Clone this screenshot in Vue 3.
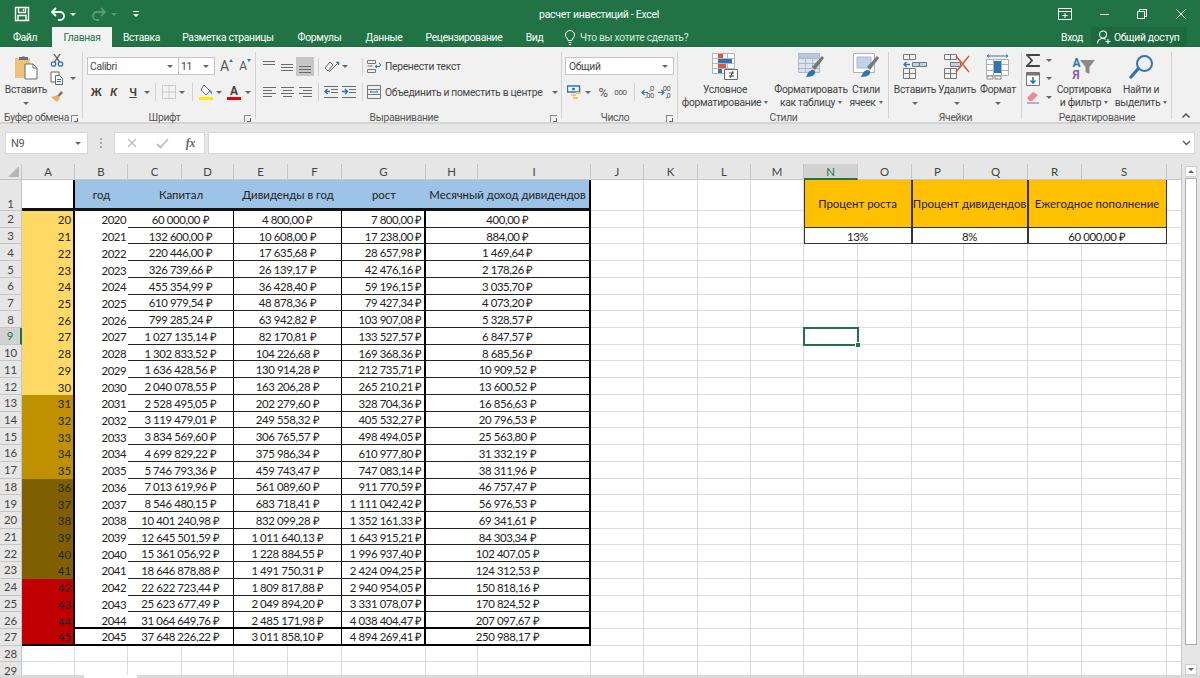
<script setup>
const letters = ['A','B','C','D','E','F','G','H','I','J','K','L','M','N','O','P','Q','R','S','']
const cap = ['60 000,00','132 600,00','220 446,00','326 739,66','455 354,99','610 979,54','799 285,24','1 027 135,14','1 302 833,52','1 636 428,56','2 040 078,55','2 528 495,05','3 119 479,01','3 834 569,60','4 699 829,22','5 746 793,36','7 013 619,96','8 546 480,15','10 401 240,98','12 645 501,59','15 361 056,92','18 646 878,88','22 622 723,44','25 623 677,49','31 064 649,76','37 648 226,22']
const div = ['4 800,00','10 608,00','17 635,68','26 139,17','36 428,40','48 878,36','63 942,82','82 170,81','104 226,68','130 914,28','163 206,28','202 279,60','249 558,32','306 765,57','375 986,34','459 743,47','561 089,60','683 718,41','832 099,28','1 011 640,13','1 228 884,55','1 491 750,31','1 809 817,88','2 049 894,20','2 485 171,98','3 011 858,10']
const gro = ['7 800,00','17 238,00','28 657,98','42 476,16','59 196,15','79 427,34','103 907,08','133 527,57','169 368,36','212 735,71','265 210,21','328 704,36','405 532,27','498 494,05','610 977,80','747 083,14','911 770,59','1 111 042,42','1 352 161,33','1 643 915,21','1 996 937,40','2 424 094,25','2 940 954,05','3 331 078,07','4 038 404,47','4 894 269,41']
const mon = ['400,00','884,00','1 469,64','2 178,26','3 035,70','4 073,20','5 328,57','6 847,57','8 685,56','10 909,52','13 600,52','16 856,63','20 796,53','25 563,80','31 332,19','38 311,96','46 757,47','56 976,53','69 341,61','84 303,34','102 407,05','124 312,53','150 818,16','170 824,52','207 097,67','250 988,17']
const rub = v => v + ' ₽'

const cells = []
function add(r, c, text, cls, span = 1, rspan = 1) {
  cells.push({
    key: r + '-' + c,
    text,
    cls,
    pos: { gridColumn: `${c + 1} / span ${span}`, gridRow: `${r + 1} / span ${rspan}` }
  })
}
// column numbers: A=1 ... S=19, filler=20
for (let r = 1; r <= 29; r++) {
  for (let c = 1; c <= 20; c++) {
    const inTable = c <= 9 && r <= 27
    const inParam = c >= 14 && c <= 19 && r <= 3
    if (!inTable && !inParam) add(r, c, '', 'plain')
  }
}
add(1, 1, '', 'a1')
add(1, 2, 'год', 'blue ctr')
add(1, 3, 'Капитал', 'blue ctr', 2)
add(1, 5, 'Дивиденды в год', 'blue ctr', 2)
add(1, 7, 'рост', 'blue ctr')
add(1, 8, 'Месячный доход дивидендов', 'blue ctr end', 2)
for (let i = 0; i < 26; i++) {
  const r = i + 2
  const edge = r === 27 ? ' last' : r === 26 ? ' prelast' : ''
  const tone = i <= 10 ? 'gold1' : i <= 15 ? 'gold2' : i <= 21 ? 'gold3' : 'red'
  add(r, 1, String(20 + i), 'age rgt ' + tone + edge)
  add(r, 2, String(2020 + i), 'year rgt' + edge)
  add(r, 3, rub(cap[i]), 'val ctr thin' + edge, 2)
  add(r, 5, rub(div[i]), 'val ctr thin' + edge, 2)
  add(r, 7, rub(gro[i]), 'val rgt thick' + edge)
  add(r, 8, rub(mon[i]), 'val ctr thick' + edge, 2)
}
add(1, 14, 'Процент роста', 'amber ctr', 2, 2)
add(1, 16, 'Процент дивидендов', 'amber ctr', 2, 2)
add(1, 18, 'Ежегодное пополнение', 'amber ctr', 2, 2)
add(3, 14, '13%', 'param ctr', 2)
add(3, 16, '8%', 'param ctr', 2)
add(3, 18, '60 000,00 ₽', 'param ctr', 2)

const rows = Array.from({ length: 29 }, (_, i) => i + 1)
const selPos = { gridColumn: '15 / span 1', gridRow: '10 / span 1' }
</script>

<template>
  <div class="app">
    <div class="title">
      <div class="qat">
        <svg class="q-save" width="16" height="16" viewBox="0 0 16 16" fill="none" stroke="#fff" stroke-width="1.4"><path d="M1.500 1.500h13v13h-13z"/><path d="M4.500 1.500v5h7v-5M4 14.500v-5h8v5"/><path d="M9.500 3v2" /></svg>
        <svg class="q-undo" width="16" height="14" viewBox="0 0 16 14" fill="none" stroke="#fff" stroke-width="1.8"><path d="M6 1 2 5l4 4"/><path d="M2 5h8a4 4 0 0 1 0 8H8"/></svg>
        <i class="caret white"></i>
        <svg class="q-redo" width="16" height="14" viewBox="0 0 16 14" fill="none" stroke="#5b9a78" stroke-width="1.8"><path d="m10 1 4 4-4 4"/><path d="M14 5H6a4 4 0 0 0 0 8h2"/></svg>
        <i class="caret dim"></i>
        <svg class="q-cust" width="8" height="8" viewBox="0 0 8 8" fill="#fff"><path d="M1 1h6v1H1zM1 4h6L4 7z"/></svg>
      </div>
      <div class="doc">расчет инвестиций - Excel</div>
      <div class="win">
        <svg width="14" height="12" viewBox="0 0 14 12" fill="none" stroke="#fff"><path d="M.5.500h13v11H.5z"/><path d="M1 3.500h12M7 5v5M4.500 7.500h5"/></svg>
        <svg width="12" height="12" viewBox="0 0 12 12" stroke="#cfe3d8"><path d="M2 6.500h9"/></svg>
        <svg width="12" height="12" viewBox="0 0 12 12" fill="none" stroke="#fff"><path d="M1.500 3.500h7v7h-7zM3.500 3.500v-2h7v7h-2"/></svg>
        <svg width="12" height="12" viewBox="0 0 12 12" stroke="#fff"><path d="m1.500 1.500 9 9m0-9-9 9"/></svg>
      </div>
    </div>

    <div class="tabs">
      <span class="tab t1">Файл</span>
      <span class="tab t2 on">Главная</span>
      <span class="tab t3">Вставка</span>
      <span class="tab t4">Разметка страницы</span>
      <span class="tab t5">Формулы</span>
      <span class="tab t6">Данные</span>
      <span class="tab t7">Рецензирование</span>
      <span class="tab t8">Вид</span>
      <span class="tell">
        <svg width="12" height="15" viewBox="0 0 12 15" fill="none" stroke="#fff"><path d="M4 10.500C4 8.500 1.500 7.500 1.500 5a4.500 4.500 0 0 1 9 0c0 2.500-2.500 3.500-2.500 5.500zM4.500 12.500h3M5 14.500h2"/></svg>
        Что вы хотите сделать?
      </span>
      <span class="login">Вход</span>
      <span class="share">
        <svg width="14" height="14" viewBox="0 0 14 14" fill="none" stroke="#fff" stroke-width="1.100"><circle cx="6" cy="4.500" r="3.500"/><path d="M.5 13.500c0-3 2-5 5.500-5 1.200 0 2 .3 2.700.7M11 9v5M8.500 11.500h5"/></svg>
        Общий доступ
      </span>
    </div>

    <div class="ribbon">
      <section class="group g-clip">
        <div class="body row-body">
          <div class="big paste">
            <svg width="24" height="26" viewBox="0 0 24 26"><path d="M1 4h15v20H1z" fill="#eec27a"/><path d="M5 3h3a2 2 0 0 1 3 0h3v3H5z" fill="#6d6d6d"/><path d="M11 10h8l4 4v11H11z" fill="#fff" stroke="#6d6d6d"/><path d="M19 10v4h4" fill="none" stroke="#6d6d6d"/></svg>
            <span>Вставить</span>
            <i class="caret"></i>
          </div>
          <div class="smalls clip-smalls">
            <svg width="14" height="14" viewBox="0 0 14 14" fill="none" stroke="#2e74b5" stroke-width="1.300"><circle cx="3.500" cy="11" r="2.200"/><circle cx="10.500" cy="11" r="2.200"/><path d="M4.500 9 10 1M9.500 9 4 1" stroke="#555"/></svg>
            <span class="with-caret">
              <svg width="14" height="14" viewBox="0 0 14 14" fill="#fff" stroke="#666"><path d="M1 1h8v10H1z"/><path d="M5.500 4.500h4l3 3v6h-7z"/><path d="M7 8.500h4M7 10.500h4" stroke="#2e74b5"/></svg>
              <i class="caret"></i>
            </span>
            <svg width="14" height="14" viewBox="0 0 14 14"><path d="m7 7 4-5 2 2-4 4z" fill="#777"/><path d="M7 6 10 9 7 13 1 8l4-1z" fill="#e8b25c"/></svg>
          </div>
        </div>
        <div class="glabel"><span>Буфер обмена</span><i class="launch"></i></div>
      </section>

      <section class="group g-font">
        <div class="body">
          <div class="line font-l1">
            <div class="combo c-font">Calibri<i class="caret"></i></div>
            <div class="combo c-size">11<i class="caret"></i></div>
            <span class="glyph-a big-a">A<i class="tri up"></i></span>
            <span class="glyph-a small-a">A<i class="tri"></i></span>
          </div>
          <div class="line font-l2">
            <b class="fmt">Ж</b>
            <b class="fmt it">К</b>
            <b class="fmt ul">Ч</b>
            <i class="caret"></i>
            <i class="vsep"></i>
            <svg width="14" height="14" viewBox="0 0 14 14" fill="none" stroke="#a8a8a8" stroke-dasharray="1 1"><path d="M.5.500h13v13H.5zM7 .5v13M.5 7h13"/></svg>
            <i class="caret"></i>
            <i class="vsep"></i>
            <svg width="16" height="16" viewBox="0 0 16 16"><path d="m6 1 6 6-4 4-5-5z" fill="#fff" stroke="#666"/><path d="M12 6c2 1 2 3 2 4 -1 0-2-2-2-4z" fill="#2e74b5"/><path d="M1 13h14v3H1z" fill="#ffeb00"/></svg>
            <i class="caret"></i>
            <span class="color-a">A<i></i></span>
            <i class="caret"></i>
          </div>
        </div>
        <div class="glabel"><span>Шрифт</span><i class="launch"></i></div>
      </section>

      <section class="group g-align">
        <div class="body">
          <div class="line align-l1">
            <svg width="12" height="14" viewBox="0 0 12 14" stroke="#6a6a6a"><path d="M0 1.500h12M0 4.500h12"/></svg>
            <svg width="12" height="14" viewBox="0 0 12 14" stroke="#6a6a6a"><path d="M0 4.500h12M0 7.500h12M0 10.500h12"/></svg>
            <span class="pressed"><svg width="12" height="14" viewBox="0 0 12 14" stroke="#6a6a6a"><path d="M0 6.500h12M0 9.500h12M0 12.500h12"/></svg></span>
            <i class="vsep"></i>
            <svg width="16" height="14" viewBox="0 0 16 14" fill="none" stroke="#666"><path d="m1 8 5-6 3 3-5 6zM5 12 15 2"/><path d="m15 2-3 .5M15 2l-.5 3" stroke="#2e74b5"/></svg>
            <i class="caret"></i>
            <i></i>
            <i class="vsep"></i>
            <svg width="14" height="13" viewBox="0 0 14 13" fill="none" stroke="#777"><path d="M.5.500h8v3h-8zM.5 9.500h8v3h-8zM.5 6h5"/><path d="M8 6.500h4a1.500 1.500 0 0 0 0-3M10 5l-2 1.500L10 8" stroke="#2e74b5"/></svg>
            <span class="rt">Перенести текст</span>
          </div>
          <div class="line align-l2">
            <svg width="13" height="12" viewBox="0 0 13 12" stroke="#6a6a6a"><path d="M0 1.500h13M0 4.500h9M0 7.500h13M0 10.500h9"/></svg>
            <svg width="13" height="12" viewBox="0 0 13 12" stroke="#6a6a6a"><path d="M0 1.500h13M2 4.500h9M0 7.500h13M2 10.500h9"/></svg>
            <svg width="13" height="12" viewBox="0 0 13 12" stroke="#6a6a6a"><path d="M0 1.500h13M4 4.500h9M0 7.500h13M4 10.500h9"/></svg>
            <i class="vsep"></i>
            <svg width="14" height="12" viewBox="0 0 14 12" fill="none" stroke="#6a6a6a"><path d="M0 .5h14M7 3.500h7M7 6.500h7M0 11.500h14"/><path d="M6 5.500H1M3.500 3l-2.500 2.500L3.500 8" stroke="#2e74b5" stroke-width="1.500"/></svg>
            <svg width="14" height="12" viewBox="0 0 14 12" fill="none" stroke="#6a6a6a"><path d="M0 .5h14M7 3.500h7M7 6.500h7M0 11.500h14"/><path d="M0 5.500h5M3 3l2.500 2.500L3 8" stroke="#2e74b5" stroke-width="1.500"/></svg>
            <i></i>
            <i class="vsep"></i>
            <svg width="14" height="14" viewBox="0 0 14 14" fill="none" stroke="#777"><path d="M.5.500h13v13H.5zM.5 4.500h13M.5 9.500h13"/><path d="M3 7h8M3 7l1.500-1M11 7 9.500 6" stroke="#2e74b5"/></svg>
            <span class="rt">Объединить и поместить в центре</span>
            <i class="caret"></i>
          </div>
        </div>
        <div class="glabel"><span>Выравнивание</span><i class="launch"></i></div>
      </section>

      <section class="group g-num">
        <div class="body">
          <div class="line num-l1"><div class="combo c-num">Общий<i class="caret"></i></div></div>
          <div class="line num-l2">
            <svg width="15" height="15" viewBox="0 0 15 15"><path d="M.5 1h12v6H.5z" fill="#fff" stroke="#2e74b5" stroke-width="1.500"/><circle cx="6.500" cy="4" r="1.500" fill="#2e74b5"/><path d="M4 9h5v2H4zM9 7h5v2H9zM6 12h5v2H6z" fill="#f0c77a"/></svg>
            <i class="caret"></i>
            <span class="pct">%</span>
            <span class="thou">000</span>
            <i class="vsep"></i>
            <span class="dec">
              <span class="d-top">,0</span>
              <span class="d-bot">,00</span>
              <svg width="7" height="7" viewBox="0 0 7 7" fill="none" stroke="#2e74b5" stroke-width="1.200"><path d="M7 3.500H1M3.500 1 1 3.500 3.500 6"/></svg>
            </span>
            <span class="dec">
              <span class="d-top">,00</span>
              <span class="d-bot">,0</span>
              <svg width="7" height="7" viewBox="0 0 7 7" fill="none" stroke="#2e74b5" stroke-width="1.200"><path d="M0 3.500h6M3.500 1 6 3.500 3.500 6"/></svg>
            </span>
          </div>
        </div>
        <div class="glabel"><span>Число</span><i class="launch"></i></div>
      </section>

      <section class="group g-styles">
        <div class="body bigs styles-cols">
          <div class="big">
            <svg width="26" height="28" viewBox="0 0 26 28"><path d="M.5.500h22v20H.5zM6.500.5v20M15.500.5v20M.5 5.500h22M.5 10.500h22M.5 15.500h22" fill="#fff" stroke="#b5b5b5"/><path d="M6 1h5v4H6zM6 11h8v4H6z" fill="#d9583b"/><path d="M6 6h14v4H6zM6 16h4v4H6z" fill="#2e74b5"/><path d="M12.500 16.500h13v10h-13z" fill="#fff" stroke="#6a6a6a"/><path d="M17 20h5M17 23h5M21 18l-3 7" stroke="#444" fill="none"/></svg>
            <span>Условное</span><span>форматирование<i class="caret inl"></i></span>
          </div>
          <div class="big">
            <svg width="26" height="28" viewBox="0 0 26 28"><path d="M.5.500h21v19H.5zM7.500.5v19M14.500.5v19M.5 5.500h21M.5 10.500h21M.5 15.500h21" fill="#d8e4f2" stroke="#b0b8c2"/><path d="M1 1h20v4H1z" fill="#b5c7dc"/><path d="M14 14 24 3l2 2-9 12z" fill="#777"/><path d="M8 24c3-7 6-8 9-6 1 3-2 6-9 6z" fill="#2e74b5"/></svg>
            <span>Форматировать</span><span>как таблицу<i class="caret inl"></i></span>
          </div>
          <div class="big">
            <svg width="26" height="28" viewBox="0 0 26 28"><path d="M.5.500h21v19H.5z" fill="#fff" stroke="#b0b0b0"/><path d="M4 4h14v11H4z" fill="#bcd3ea" stroke="#b0b8c2"/><path d="M14 14 24 3l2 2-9 12z" fill="#777"/><path d="M8 24c3-7 6-8 9-6 1 3-2 6-9 6z" fill="#2e74b5"/></svg>
            <span>Стили</span><span>ячеек<i class="caret inl"></i></span>
          </div>
        </div>
        <div class="glabel center"><span>Стили</span></div>
      </section>

      <section class="group g-cells">
        <div class="body bigs cells-cols">
          <div class="big">
            <svg width="24" height="28" viewBox="0 0 24 28" fill="none" stroke="#777"><path d="M.5 1.500h12v5H.5zM6.500 1.500v5M.5 15.500h12v10H.5zM.5 20.500h12M6.500 15.500v10"/><path d="M9.500 9.500h14v4h-14zM16.500 9.500v4" fill="#bcd3ea"/><path d="M7 11.500H1M3.500 9 1 11.500 3.500 14" stroke="#2e74b5" stroke-width="1.300"/></svg>
            <span>Вставить</span><i class="caret"></i>
          </div>
          <div class="big">
            <svg width="26" height="28" viewBox="0 0 26 28" fill="none" stroke="#777"><path d="M.5 1.500h12v5H.5zM6.500 1.500v5M.5 15.500h12v10H.5zM.5 20.500h12M6.500 15.500v10"/><path d="M6.500 9.500h10v4h-10z" fill="#bcd3ea"/><path d="m12 3 13 16m0-16L12 19" stroke="#d9583b" stroke-width="1.500"/></svg>
            <span>Удалить</span><i class="caret"></i>
          </div>
          <div class="big">
            <svg width="24" height="28" viewBox="0 0 24 28" fill="none" stroke="#b0b0b0"><path d="M.5 6.500h22v16H.5zM7.500 6.500v16M15.500 6.500v16M.5 11.500h22M.5 17.500h22" fill="#fff"/><path d="M8 8h7v12H8z" fill="#2e74b5" stroke="none"/><path d="M1 3h21M1 3l2-1.500M1 3l2 1.500M22 3l-2-1.500M22 3l-2 1.500" stroke="#2e74b5"/><path d="M1 23h6v3H1zM9 23h6v3H9z" fill="#fff" stroke="#888"/></svg>
            <span>Формат</span><i class="caret"></i>
          </div>
        </div>
        <div class="glabel center"><span>Ячейки</span></div>
      </section>

      <section class="group g-edit">
        <div class="body bigs edit-cols">
          <div class="smalls edit-smalls">
            <span class="with-caret">
              <svg width="14" height="13" viewBox="0 0 14 13" fill="none" stroke="#444" stroke-width="1.800"><path d="M13 2V1H1l5 5.500L1 12h12v-1"/></svg>
              <i class="caret"></i>
            </span>
            <span class="with-caret">
              <svg width="14" height="14" viewBox="0 0 14 14" fill="#fff" stroke="#777"><path d="M.5.500h13v13H.5z"/><path d="M1 1h12v2H1z" fill="#777"/><path d="M7 5v6M4.500 8.500 7 11l2.500-2.500" fill="none" stroke="#2e74b5" stroke-width="1.600"/></svg>
              <i class="caret"></i>
            </span>
            <span class="with-caret">
              <svg width="14" height="14" viewBox="0 0 14 14"><path d="m1 8 6-6 5 3-6 6H3z" fill="#ea8a9a"/><path d="M1 13h12" stroke="#777"/></svg>
              <i class="caret"></i>
            </span>
          </div>
          <div class="big">
            <div class="sort-ico"><span class="az"><em>А</em><u>Я</u></span>
              <svg width="15" height="16" viewBox="0 0 15 16"><path d="M0 1h15L9.500 8v7l-4-2V8z" fill="#8a8a8a"/></svg>
            </div>
            <span>Сортировка</span><span>и фильтр<i class="caret inl"></i></span>
          </div>
          <div class="big">
            <svg width="26" height="28" viewBox="0 0 26 28" fill="none" stroke="#2e74b5"><circle cx="16.500" cy="10.500" r="7.500" stroke-width="2"/><path d="m10 16-7 8" stroke-width="3.400" stroke-linecap="round"/></svg>
            <span>Найти и</span><span>выделить<i class="caret inl"></i></span>
          </div>
        </div>
        <div class="glabel center"><span>Редактирование</span></div>
      </section>

      <div class="collapse">
        <svg width="10" height="7" viewBox="0 0 10 7" fill="none" stroke="#555" stroke-width="1.500"><path d="m1.500 5.500 3.500-3.500 3.500 3.500"/></svg>
      </div>
    </div>

    <div class="fbar">
      <div class="namebox">N9<i class="caret"></i></div>
      <div class="dots"></div>
      <div class="fxbox">
        <svg width="12" height="12" viewBox="0 0 12 12" stroke="#bdbdbd" stroke-width="1.300"><path d="m2 2 8 8m0-8-8 8"/></svg>
        <svg width="13" height="12" viewBox="0 0 13 12" fill="none" stroke="#bdbdbd" stroke-width="1.800"><path d="m1 7 3.500 3.500L12 2"/></svg>
        <span class="fx">fx</span>
      </div>
      <div class="finput">
        <svg width="9" height="6" viewBox="0 0 9 6" fill="none" stroke="#555" stroke-width="1.300"><path d="m1 1 3.500 3.500L8 1"/></svg>
      </div>
    </div>

    <div class="sheet">
      <div class="grid">
        <div class="corner"><i></i></div>
        <div v-for="(l, i) in letters" :key="'h' + i" class="colh" :class="{ act: l === 'N' }">{{ l }}</div>
        <div
          v-for="r in rows"
          :key="'r' + r"
          class="rowh"
          :class="{ act: r === 9, tall: r === 1 }"
          :style="{ gridColumn: '1', gridRow: String(r + 1) }"
        >{{ r }}</div>
        <div v-for="c in cells" :key="c.key" class="cell" :class="c.cls" :style="c.pos">{{ c.text }}</div>
        <div class="sel" :style="selPos"><i></i></div>
      </div>
      <div class="vscroll">
        <div class="sb-btn"><i class="up"></i></div>
        <div class="thumb"></div>
        <div class="sb-btn"><i></i></div>
      </div>
    </div>

    <div class="strip"><i class="s1"></i><i class="s2"></i><i class="s3"></i></div>
  </div>
</template>

<style>
html, body { margin: 0; background: #e6e6e6; }
</style>

<style scoped>
* { box-sizing: border-box; }
i { font-style: normal; display: block; }
.app {
  width: 1200px; height: 678px; overflow: hidden; display: flex; flex-direction: column;
  background: #e6e6e6; font-family: Roboto, "Open Sans", sans-serif; color: #444; font-size: 10.300px; letter-spacing: -0.3px;
}

/* title bar */
.title { height: 28px; flex: none; background: #217346; display: grid; grid-template-columns: 1fr auto 1fr; align-items: center; color: #fff; }
.qat { display: flex; align-items: center; padding-left: 14px; }
.q-undo { margin-left: 20px; }
.q-redo { margin-left: 15px; }
.q-cust { margin-left: 15px; }
.caret { width: 0; height: 0; border-left: 3px solid transparent; border-right: 3px solid transparent; border-top: 3px solid #666; }
.caret.white { border-top-color: #fff; margin-left: 4px; }
.caret.dim { border-top-color: #5b9a78; margin-left: 4px; }
.caret.inl { display: inline-block; margin-left: 3px; vertical-align: 2px; border-left-width: 2.500px; border-right-width: 2.500px; }
.doc { font-size: 10.500px; transform: translateX(-1px); }
.win { display: grid; grid-template-columns: 39px 39px 38px 39px; justify-content: end; justify-items: center; align-items: center; }

/* tabs */
.tabs { height: 19px; flex: none; background: #217346; display: grid; grid-template-columns: 50px 2px 60px 59px 114px 69px 60px 100px 41px 9px 130px 1fr auto; align-items: stretch; color: #fff; box-shadow: inset 0 -1px 0 #1d6a40; }
.tab { display: flex; align-items: center; justify-content: center; white-space: nowrap; }
.t2 { grid-column: 3; }
.tab.on { background: #f3f3f3; color: #217346; margin-top: -1px; }
.tell { grid-column: 11; display: flex; align-items: center; gap: 4px; white-space: nowrap; color: #d9e8df; }
.tell svg { flex: none; }
.login { grid-column: 12; justify-self: end; align-self: center; margin-right: 8px; }
.share { grid-column: 13; width: 96px; margin-right: 13px; background: #1d6a40; display: flex; align-items: center; gap: 3px; padding-left: 6px; white-space: nowrap; margin-top: -1px; }

/* ribbon */
.ribbon { height: 77px; flex: none; display: flex; background: #f1f1f1; border-bottom: 2px solid #d4d4d4; }
.group { position: relative; display: flex; flex-direction: column; padding-top: 6px; }
.group::after { content: ""; position: absolute; right: 0; top: 5px; bottom: 3px; width: 1px; background: #d2d2d2; }
.g-clip { width: 83px; }
.g-font { width: 173px; }
.g-align { width: 306px; }
.g-num { width: 116px; }
.g-styles { width: 211px; }
.g-cells { width: 133px; }
.g-edit { width: 150px; }
.body { height: 59px; flex: none; }
.row-body { display: flex; }
.glabel { height: 10px; margin-top: 1px; display: flex; align-items: center; padding: 0 2px; line-height: 10px; color: #555; white-space: nowrap; }
.glabel span { flex: 1; text-align: center; }
.launch { width: 7px; height: 7px; margin-right: 3px; border-left: 1px solid #888; border-top: 1px solid #888; position: relative; }
.launch::after { content: ""; position: absolute; right: 0; bottom: 0; width: 3px; height: 3px; border-right: 1px solid #666; border-bottom: 1px solid #666; }
.big { display: flex; flex-direction: column; align-items: center; line-height: 13px; white-space: nowrap; min-width: 0; }
.big svg { height: 28px; flex: none; margin-bottom: 2px; }
.big .caret { margin-top: 6px; }
.big .caret.inl { margin-top: 0; }
.paste { width: 52px; }
.paste svg { margin-top: 1px; margin-bottom: 3px; height: 26px; }
.smalls { display: flex; flex-direction: column; justify-content: space-between; height: 50px; }
.clip-smalls { margin-left: -2px; }
.with-caret { display: flex; align-items: center; gap: 6px; }
.bigs { display: grid; justify-items: center; }
.styles-cols { grid-template-columns: 94px 78px 32px; }
.cells-cols { grid-template-columns: 52px 32px 50px; }
.edit-cols { grid-template-columns: 30px 64px 50px; }
.edit-smalls { justify-self: end; margin-top: 1px; height: 50px; }

.line { display: grid; align-items: center; justify-items: center; height: 18px; padding-left: 4px; }
.font-l1 { margin-top: 4px; margin-bottom: 8px; grid-template-columns: 92px 36px 19px 18px; }
.font-l2 { grid-template-columns: 18px 17px 22px 5px 13px 14px 12px 8px 20px 6px 24px 4px; }
.combo { height: 18px; width: 100%; background: #fff; border: 1px solid #c6c6c6; display: flex; align-items: center; justify-content: space-between; padding: 0 5px 0 2px; color: #444; }
.c-size { border-left: none; }
.glyph-a { position: relative; font-size: 14px; line-height: 18px; color: #555; }
.small-a { font-size: 12px; }
.tri { position: absolute; right: -4px; top: 2px; width: 0; height: 0; border-left: 2.500px solid transparent; border-right: 2.500px solid transparent; border-top: 3px solid #2e74b5; }
.tri.up { border-top: none; border-bottom: 3px solid #2e74b5; }
.fmt { font-size: 11px; font-weight: 700; color: #444; }
.fmt.it { font-style: italic; }
.fmt.ul { text-decoration: underline; }
.vsep { width: 1px; height: 18px; background: #d2d2d2; }
.color-a { font-size: 12px; font-weight: 700; color: #444; line-height: 12px; display: flex; flex-direction: column; align-items: center; }
.color-a i { width: 14px; height: 3px; background: #e00; }
.align-l1 { margin-top: 4px; margin-bottom: 8px; grid-template-columns: 18px 18px 18px 8px 20px 6px 11px 6px 18px auto; justify-content: start; }
.align-l2 { grid-template-columns: 18px 18px 18px 8px 18px 18px 1px 6px 18px 166px 12px; justify-content: start; }
.pressed { width: 18px; height: 19px; background: #c6c6c6; display: flex; align-items: center; justify-content: center; }
.rt { justify-self: start; white-space: nowrap; color: #444; padding-left: 2px; }
.num-l1 { margin-top: 4px; margin-bottom: 8px; grid-template-columns: 109px; padding-left: 3px; }
.c-num { padding-left: 3px; }
.num-l2 { padding-left: 3px; grid-template-columns: 18px 10px 20px 15px 12px 15px 18px; }
.pct { font-size: 13px; color: #555; }
.thou { font-size: 8px; color: #555; }
.dec { width: 13px; height: 15px; position: relative; font-size: 7.500px; line-height: 8px; color: #555; }
.d-top { position: absolute; right: 0; top: 0; }
.d-bot { position: absolute; right: 0; bottom: 0; }
.dec svg { position: absolute; left: 0; top: 4px; }
.sort-ico { height: 28px; display: flex; align-items: flex-end; margin-bottom: 2px; }
.big .sort-ico svg { height: 16px; margin: 0 0 6px; }
.az { display: flex; flex-direction: column; font-size: 12px; line-height: 12px; font-weight: 700; }
.az em { font-style: normal; color: #2e74b5; }
.az u { text-decoration: none; color: #8a5cb5; }
.collapse { flex: 1; display: flex; align-items: flex-end; justify-content: center; padding-bottom: 3px; }

/* formula bar */
.fbar { height: 40px; flex: none; display: flex; padding-top: 8px; align-items: flex-start; }
.namebox { margin-left: 5px; width: 83px; height: 22px; background: #fff; border: 1px solid #d8d8d8; display: flex; align-items: center; justify-content: space-between; padding: 0 6px 0 5px; font-size: 11px; color: #555; }
.dots { width: 26px; height: 22px; display: flex; align-items: center; justify-content: center; }
.dots::before { content: ""; width: 2px; height: 10px; background: repeating-linear-gradient(#aaa 0 2px, transparent 2px 4px); }
.fxbox { width: 91px; height: 22px; background: #fff; border: 1px solid #d8d8d8; display: grid; grid-template-columns: 31px 30px 1fr; justify-items: center; align-items: center; padding-left: 1px; }
.fx { font-family: "Liberation Serif", serif; font-style: italic; font-size: 12px; color: #666; font-weight: 700; }
.finput { margin-left: 3px; width: 987px; height: 22px; background: #fff; border: 1px solid #d8d8d8; display: flex; align-items: center; justify-content: flex-end; padding-right: 3px; }

/* sheet */
.sheet { height: 511px; flex: none; display: flex; background: #e6e6e6; overflow: hidden; }
.grid {
  width: 1182px; height: 511px; flex: none; overflow: hidden; display: grid; background: #fff;
  grid-template-columns: 22px 53px 53px 54px 52px 54px 54px 84px 52px 113px 53px 54px 53px 53px 54px 54px 52px 64px 54px 85px 15px;
  grid-template-rows: 16px 31px repeat(28, 16.730px);
  font-family: Lato, "Open Sans", sans-serif; font-size: 11.400px; color: #222; letter-spacing: 0; border-right: 1px solid #c6c6c6;
}
.corner { background: #e6e6e6; border-right: 1px solid #c6c6c6; border-bottom: 1px solid #c6c6c6; position: relative; overflow: hidden; }
.corner i { position: absolute; right: 2px; bottom: 2px; width: 0; height: 0; border-left: 11px solid transparent; border-bottom: 11px solid #b6b6b6; }
.colh { background: #e6e6e6; border-right: 1px solid #c6c6c6; border-bottom: 1px solid #c6c6c6; text-align: center; line-height: 16px; color: #444; min-width: 0; }
.colh.act { background: #d2d2d2; color: #217346; border-bottom: 2px solid #217346; }
.rowh { background: #e6e6e6; border-right: 1px solid #c6c6c6; border-bottom: 1px solid #c6c6c6; display: flex; align-items: center; justify-content: center; color: #444; }
.rowh.tall { align-items: flex-end; }
.rowh.act { background: #d2d2d2; color: #217346; border-right: 2px solid #217346; }
.cell { min-width: 0; display: flex; align-items: center; white-space: nowrap; padding: 0 2px; overflow: hidden; }
.plain { border-right: 1px solid #dcdcdc; border-bottom: 1px solid #dcdcdc; }
.ctr { justify-content: center; overflow: visible; padding: 0; }
.rgt { justify-content: flex-end; }
.cell.val, .cell.year, .cell.age, .cell.param, .cell.blue { padding-top: 1px; }
.val, .param { letter-spacing: -0.4px; }
.year { letter-spacing: -0.5px; }
.a1 { background: #fff; border-right: 2px solid #000; border-bottom: 3px solid #111; }
.blue { background: #9dc3e6; border-bottom: 3px solid #111; }
.blue.end { border-right: 2px solid #000; }
.age { border-right: 2px solid #000; }
.gold1 { background: #ffd966; }
.gold2 { background: #bf9000; }
.gold3 { background: #7f6000; }
.red { background: #c00000; }
.val { border-bottom: 1px solid #222; }
.thin { border-right: 1px solid #000; }
.thick { border-right: 2px solid #000; }
.prelast.year, .prelast.val { border-bottom: 2px solid #000; }
.last { border-bottom: 2px solid #000; }
.amber { background: #ffc000; border-right: 1px solid #333; border-bottom: 1px solid #333; box-shadow: inset 1px 0 0 #333; }
.param { border-right: 1px solid #333; border-bottom: 1px solid #333; box-shadow: inset 1px 0 0 #333; }
.sel { margin: -1px; border: 2px solid #217346; position: relative; z-index: 2; }
.sel i { position: absolute; right: -4px; bottom: -4px; width: 6px; height: 6px; background: #217346; border: 1px solid #fff; }

.vscroll { width: 18px; flex: none; padding: 2px 3px 0; display: flex; flex-direction: column; }
.sb-btn { height: 11px; flex: none; background: #fff; border: 1px solid #cfcfcf; display: flex; align-items: center; justify-content: center; }
.sb-btn i { width: 0; height: 0; border-left: 3px solid transparent; border-right: 3px solid transparent; border-top: 3px solid #666; }
.sb-btn i.up { border-top: none; border-bottom: 3px solid #666; }
.thumb { height: 467px; margin: 1px 0 19px; background: #fff; border: 1px solid #ababab; flex: none; }
.strip { height: 3px; flex: none; display: flex; }
.s1 { width: 84px; background: #d9d9d9; }
.s2 { width: 53px; background: #fff; }
.s3 { flex: 1; background: #d9d9d9; }
</style>
